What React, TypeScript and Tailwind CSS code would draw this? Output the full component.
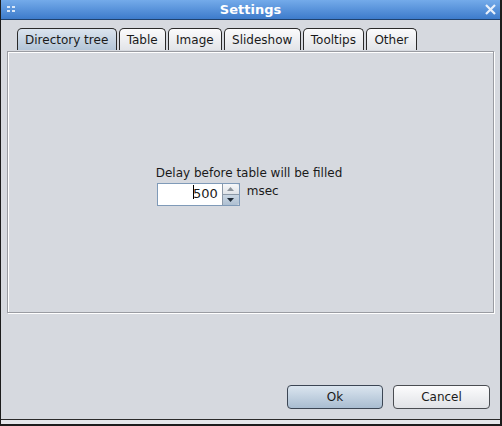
import { ChevronUp, ChevronDown } from 'lucide-react'

const tabs = ['Directory tree', 'Table', 'Image', 'Slideshow', 'Tooltips', 'Other']

export default function App() {
  return (
    <div
      className="w-[502px] h-[426px] flex flex-col bg-[#d6d9df] border-l border-r-2 border-b-2 border-[#1c1c1c] text-[#1a1a1a] overflow-hidden"
      style={{ fontFamily: '"DejaVu Sans", "Liberation Sans", sans-serif' }}
    >
      {/* Title bar */}
      <div className="relative h-[20px] shrink-0 flex items-center justify-center bg-gradient-to-b from-[#74abea] to-[#3d7bcb] border-b border-[#20426e]">
        <div className="absolute left-[6px] top-[6px] grid grid-cols-2 gap-x-[2px] gap-y-[2px]">
          <span className="w-[3px] h-[2px] bg-[#dbe8f8]" />
          <span className="w-[3px] h-[2px] bg-[#dbe8f8]" />
          <span className="w-[3px] h-[2px] bg-[#dbe8f8]" />
          <span className="w-[3px] h-[2px] bg-[#dbe8f8]" />
        </div>
        <span className="text-[13px] font-bold text-white leading-none">Settings</span>
        <svg className="absolute right-[4px] top-[4px]" width="11" height="11" viewBox="0 0 11 11">
          <path d="M1 1 L10 10 M10 1 L1 10" stroke="#e8f0fb" strokeWidth="2.2" />
        </svg>
      </div>

      {/* Body */}
      <div className="flex-1 flex flex-col px-[6px] pt-[8px]">
        <div className="flex gap-[2px] pl-[10px] h-[22px]">
          {tabs.map((t, i) => (
            <div
              key={t}
              className={
                'h-full pl-[7px] pr-[7.4px] flex items-center rounded-t-[5px] border border-b-0 border-[#2a2a2a] text-[12px] leading-none ' +
                (i === 0
                  ? 'bg-gradient-to-b from-[#dbe4ee] to-[#b3c5d8]'
                  : 'bg-gradient-to-b from-[#fbfbfc] to-[#e2e4e8]')
              }
            >
              {t}
            </div>
          ))}
        </div>

        <div className="mt-[1px] h-[262px] border border-[#9a9ca2] shadow-[1px_1px_0_#ffffff,inset_1px_1px_0_#ffffff] flex items-center justify-center">
          <div className="flex flex-col items-start mt-[7px] -ml-[2px]">
            <span className="text-[12px] leading-[15px] -ml-[1px]">Delay before table will be filled</span>
            <div className="flex items-start mt-[2px]">
              <div className="flex h-[23px] border border-[#7f9ab8]">
                <div className="relative w-[64px] bg-white flex items-center justify-end pr-[4px] text-[13px]">
                  <span className="relative">
                    <span className="absolute left-0 top-[1px] w-px h-[14px] bg-black" />
                    500
                  </span>
                </div>
                <div className="w-[17px] flex flex-col border-l border-[#8c99a8]">
                  <div className="flex-1 flex items-center justify-center bg-gradient-to-b from-[#f7f8fa] to-[#dfe3e8] border-b border-[#8c99a8] rounded-tr-[3px]">
                    <svg width="7" height="4" viewBox="0 0 7 4">
                      <path d="M0 4 L3.5 0 L7 4 Z" fill="#8c949c" />
                    </svg>
                  </div>
                  <div className="flex-1 flex items-center justify-center bg-gradient-to-b from-[#c9d6e3] to-[#aebfd1] rounded-br-[3px]">
                    <svg width="7" height="4" viewBox="0 0 7 4">
                      <path d="M0 0 L7 0 L3.5 4 Z" fill="#1e2a36" />
                    </svg>
                  </div>
                </div>
              </div>
              <span className="ml-[7px] text-[12px] leading-[15px] mt-[1px]">msec</span>
            </div>
          </div>
        </div>

        <div className="flex-1" />

        <div className="flex justify-end gap-[10px] pr-[4px] mb-[10px]">
          <button className="w-[96px] h-[24px] rounded-[4px] border border-[#3c4654] bg-gradient-to-b from-[#dbe5ef] to-[#a9bdd1] text-[12px] leading-none">
            Ok
          </button>
          <button className="w-[97px] h-[24px] rounded-[4px] border border-[#4a4d52] bg-gradient-to-b from-[#fcfcfd] to-[#e0e2e6] text-[12px] leading-none">
            Cancel
          </button>
        </div>
      </div>

      <div className="h-[5px] shrink-0 border-t border-[#2a2a2a] bg-[#e4e6ea]" />
    </div>
  )
}
